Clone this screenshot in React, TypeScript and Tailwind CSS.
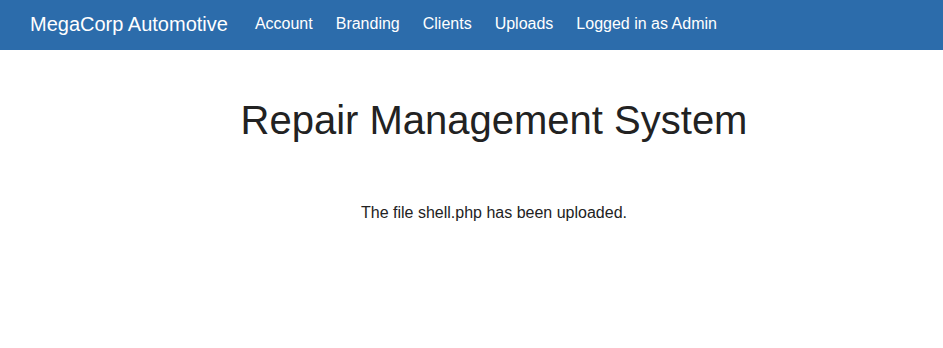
export default function App() {
  return (
    <div className="min-h-[348px] bg-white" style={{ fontFamily: '"Liberation Sans", Arial, sans-serif' }}>
      <nav className="flex h-[50px] items-center bg-[#2c6cab] pb-[2px] text-white">
        <span className="ml-[30px] text-[20px]">MegaCorp Automotive</span>
        <div className="ml-[27px] flex gap-[23px] text-[16px]">
          <span>Account</span>
          <span>Branding</span>
          <span>Clients</span>
          <span>Uploads</span>
          <span>Logged in as Admin</span>
        </div>
      </nav>
      <div className="flex flex-col items-center pl-[45px] text-[#222]">
        <h1 className="mt-[47px] text-[40px] leading-[46px]">Repair Management System</h1>
        <p className="mt-[58px] text-[16px]">The file shell.php has been uploaded.</p>
      </div>
    </div>
  );
}
